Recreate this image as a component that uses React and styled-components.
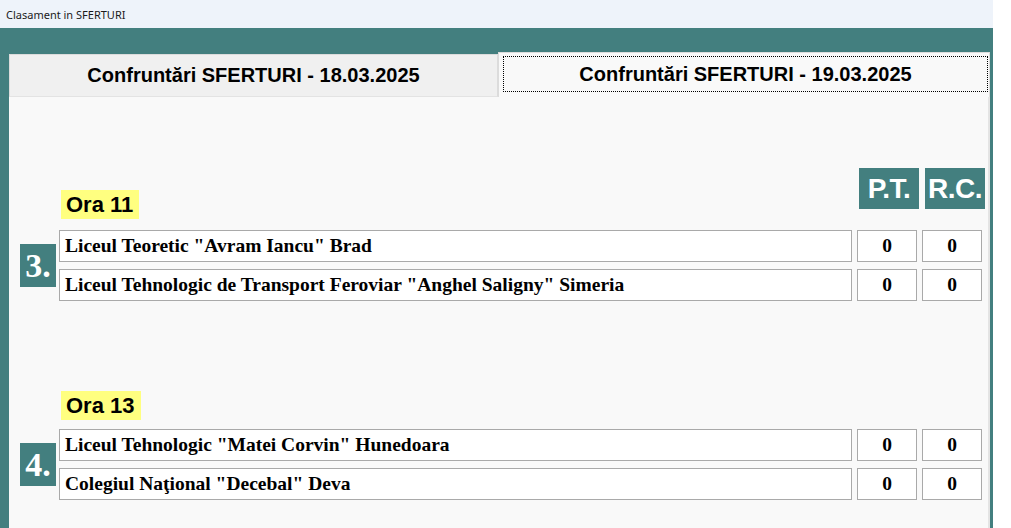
import React from "react";
import styled, { createGlobalStyle } from "styled-components";

const GlobalStyle = createGlobalStyle`
  html, body {
    margin: 0;
    padding: 0;
    background: #ffffff;
  }
  body {
    width: 1011px;
    height: 528px;
    overflow: hidden;
  }
`;

const Window = styled.div`
  width: 993px;
  height: 528px;
  display: flex;
  flex-direction: column;
`;

const TitleBar = styled.div`
  height: 28px;
  flex-shrink: 0;
  display: flex;
  align-items: center;
  padding-left: 6px;
  background: #eef3fa;
  font-family: "Noto Sans", "Open Sans", sans-serif;
  font-size: 11px;
  color: #1a1a1a;
`;

const Client = styled.div`
  flex: 1;
  min-height: 0;
  display: flex;
  flex-direction: column;
  padding: 24px 3px 0 9px;
  background: #437f7f;
`;

const TabStrip = styled.div`
  height: 45px;
  flex-shrink: 0;
  display: flex;
  align-items: flex-end;
`;

const Tab = styled.div`
  box-sizing: border-box;
  flex: 0 0 ${(p) => p.$width}px;
  height: ${(p) => (p.$active ? 45 : 43)}px;
  display: flex;
  align-items: stretch;
  background: ${(p) => (p.$active ? "#f9f9f9" : "#f0f0f0")};
  border: 1px solid #dcdcdc;
  border-bottom: ${(p) => (p.$active ? "none" : "1px solid #e3e3e3")};
  font-family: "Liberation Sans", Arial, sans-serif;
  font-weight: bold;
  font-size: 20px;
  color: #000;
`;

const TabLabel = styled.div`
  flex: 1;
  display: flex;
  align-items: center;
  justify-content: center;
  margin: ${(p) => (p.$focused ? "3px 1px 5px 4px" : "0")};
  border: ${(p) => (p.$focused ? "1px dotted #000" : "none")};
`;

const Panel = styled.div`
  box-sizing: border-box;
  flex: 1;
  min-height: 0;
  overflow: hidden;
  display: flex;
  flex-direction: column;
  gap: 90px;
  padding: 71px 7px 0 11px;
  background: #f9f9f9;
  border-right: 2px solid #e4e4e4;
`;

const Section = styled.div`
  display: flex;
  flex-direction: column;
  flex-shrink: 0;
`;

const HeadLine = styled.div`
  display: flex;
  align-items: flex-end;
  margin-bottom: ${(p) => (p.$tight ? 9 : 11)}px;
`;

const Hour = styled.div`
  margin-left: 41px;
  padding: 0 6px 0 5px;
  height: 29px;
  line-height: 30px;
  background: #ffff80;
  font-family: "Liberation Sans", Arial, sans-serif;
  font-weight: bold;
  font-size: 22px;
  color: #000;
`;

const Headers = styled.div`
  display: flex;
  gap: 6px;
  margin-left: auto;
  margin-right: -4px;
  margin-bottom: 10px;
`;

const HeaderCell = styled.div`
  width: 60px;
  height: 41px;
  display: flex;
  align-items: center;
  justify-content: center;
  background: #437f7f;
  font-family: "Liberation Sans", Arial, sans-serif;
  font-weight: bold;
  font-size: 28px;
  letter-spacing: -0.5px;
  color: #ffffff;
`;

const Body = styled.div`
  display: flex;
  align-items: center;
`;

const Number = styled.div`
  flex-shrink: 0;
  width: 36px;
  height: 43px;
  margin-right: 3px;
  display: flex;
  align-items: center;
  justify-content: center;
  background: #437f7f;
  font-family: "Liberation Serif", "Times New Roman", serif;
  font-weight: bold;
  font-size: 34px;
  color: #ffffff;
`;

const Rows = styled.div`
  display: flex;
  flex-direction: column;
  gap: 7px;
`;

const Row = styled.div`
  display: flex;
  gap: 5px;
`;

const Field = styled.div`
  box-sizing: border-box;
  flex-shrink: 0;
  width: ${(p) => p.$width}px;
  height: 32px;
  display: flex;
  align-items: center;
  justify-content: ${(p) => (p.$center ? "center" : "flex-start")};
  padding-left: ${(p) => (p.$center ? 0 : 5)}px;
  background: #ffffff;
  border: 1px solid #a9a9a9;
  font-family: "Liberation Serif", "Times New Roman", serif;
  font-weight: bold;
  font-size: 19.5px;
  color: #000;
  white-space: nowrap;
`;

const matches = [
  {
    no: 3,
    hour: "Ora 11",
    headers: true,
    teams: [
      { name: 'Liceul Teoretic "Avram Iancu" Brad', pt: 0, rc: 0 },
      {
        name: 'Liceul Tehnologic de Transport Feroviar "Anghel Saligny" Simeria',
        pt: 0,
        rc: 0,
      },
    ],
  },
  {
    no: 4,
    hour: "Ora 13",
    headers: false,
    teams: [
      { name: 'Liceul Tehnologic "Matei Corvin" Hunedoara', pt: 0, rc: 0 },
      { name: 'Colegiul Naţional "Decebal" Deva', pt: 0, rc: 0 },
    ],
  },
];

const Match = ({ match }) => (
  <Section>
    <HeadLine $tight={!match.headers}>
      <Hour>{match.hour}</Hour>
      {match.headers && (
        <Headers>
          <HeaderCell>P.T.</HeaderCell>
          <HeaderCell>R.C.</HeaderCell>
        </Headers>
      )}
    </HeadLine>
    <Body>
      <Number>{match.no}.</Number>
      <Rows>
        {match.teams.map((t) => (
          <Row key={t.name}>
            <Field $width={793}>{t.name}</Field>
            <Field $width={60} $center>
              {t.pt}
            </Field>
            <Field $width={60} $center>
              {t.rc}
            </Field>
          </Row>
        ))}
      </Rows>
    </Body>
  </Section>
);

const App = () => {
  return (
    <>
      <GlobalStyle />
      <Window>
        <TitleBar>Clasament in SFERTURI</TitleBar>
        <Client>
          <TabStrip>
            <Tab $width={489}>
              <TabLabel>Confruntări SFERTURI - 18.03.2025</TabLabel>
            </Tab>
            <Tab $width={492} $active>
              <TabLabel $focused>Confruntări SFERTURI - 19.03.2025</TabLabel>
            </Tab>
          </TabStrip>
          <Panel>
            {matches.map((m) => (
              <Match key={m.no} match={m} />
            ))}
          </Panel>
        </Client>
      </Window>
    </>
  );
};

export default App;
